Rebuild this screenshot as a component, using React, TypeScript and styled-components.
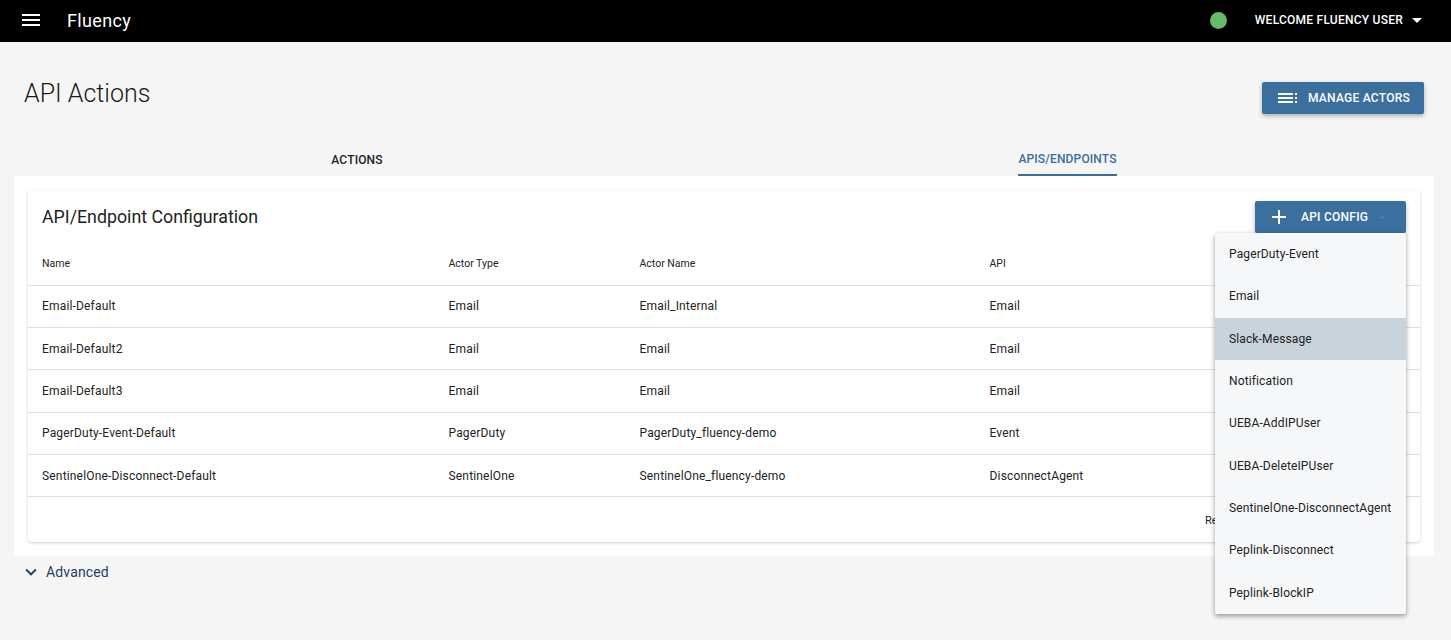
import { createGlobalStyle } from "styled-components";
import styled from "styled-components";

const rows = [
  ["Email-Default", "Email", "Email_Internal", "Email"],
  ["Email-Default2", "Email", "Email", "Email"],
  ["Email-Default3", "Email", "Email", "Email"],
  ["PagerDuty-Event-Default", "PagerDuty", "PagerDuty_fluency-demo", "Event"],
  ["SentinelOne-Disconnect-Default", "SentinelOne", "SentinelOne_fluency-demo", "DisconnectAgent"],
];

const menuItems = [
  "PagerDuty-Event",
  "Email",
  "Slack-Message",
  "Notification",
  "UEBA-AddIPUser",
  "UEBA-DeleteIPUser",
  "SentinelOne-DisconnectAgent",
  "Peplink-Disconnect",
  "Peplink-BlockIP",
];

export default function App() {
  return (
    <>
      <GlobalStyle />
      <AppBar>
        <MenuButton aria-label="menu">
          <svg width="24" height="24" viewBox="0 0 24 24" fill="currentColor">
            <path d="M3 18h18v-2H3v2zm0-5h18v-2H3v2zm0-7v2h18V6H3z" />
          </svg>
        </MenuButton>
        <Brand>Fluency</Brand>
        <StatusDot />
        <UserMenu>
          WELCOME FLUENCY USER
          <svg width="24" height="24" viewBox="0 0 24 24" fill="currentColor">
            <path d="M7 10l5 5 5-5z" />
          </svg>
        </UserMenu>
      </AppBar>

      <Page>
        <PageHeader>
          <Title>API Actions</Title>
          <ManageButton>
            <svg width="24" height="24" viewBox="0 0 24 24" fill="currentColor">
              <path d="M3 7h15v2H3zM3 11h15v2H3zM3 15h15v2H3zM20 7h2v2h-2zM20 11h2v2h-2zM20 15h2v2h-2z" />
            </svg>
            MANAGE ACTORS
          </ManageButton>
        </PageHeader>

        <Tabs>
          <Tab>
            <TabLabel>ACTIONS</TabLabel>
          </Tab>
          <Tab>
            <TabLabel $active>APIS/ENDPOINTS</TabLabel>
          </Tab>
        </Tabs>

        <Panel>
          <Card>
            <CardHeader>
              <CardTitle>API/Endpoint Configuration</CardTitle>
              <ConfigWrap>
                <ConfigButton>
                  <svg width="24" height="24" viewBox="0 0 24 24" fill="currentColor">
                    <path d="M19 13h-6v6h-2v-6H5v-2h6V5h2v6h6v2z" />
                  </svg>
                  <span>API CONFIG</span>
                  <Caret viewBox="0 0 24 24" fill="currentColor">
                    <path d="M7 14l5-5 5 5z" />
                  </Caret>
                </ConfigButton>
                <Menu>
                  {menuItems.map((item) => (
                    <MenuItem key={item} $selected={item === "Slack-Message"}>
                      {item}
                    </MenuItem>
                  ))}
                </Menu>
              </ConfigWrap>
            </CardHeader>

            <Table>
              <thead>
                <tr>
                  <HeadCell $width={406.5}>Name</HeadCell>
                  <HeadCell $width={191}>Actor Type</HeadCell>
                  <HeadCell $width={350}>Actor Name</HeadCell>
                  <HeadCell>API</HeadCell>
                </tr>
              </thead>
              <tbody>
                {rows.map((row) => (
                  <tr key={row[0]}>
                    {row.map((cell, i) => (
                      <Cell key={i}>{cell}</Cell>
                    ))}
                  </tr>
                ))}
              </tbody>
            </Table>

            <CardFooter>
              <FooterText>Re</FooterText>
            </CardFooter>
          </Card>
        </Panel>

        <Advanced>
          <svg width="22" height="22" viewBox="0 0 24 24" fill="currentColor">
            <path d="M7.41 8.59L12 13.17l4.59-4.58L18 10l-6 6-6-6 1.41-1.41z" />
          </svg>
          Advanced
        </Advanced>
      </Page>
    </>
  );
}

const GlobalStyle = createGlobalStyle`
  html, body {
    margin: 0;
    height: 100%;
    overflow: hidden;
    background: #f5f5f5;
    font-family: Roboto, "Liberation Sans", sans-serif;
  }
  * { box-sizing: border-box; }
`;

const AppBar = styled.header`
  height: 42px;
  background: #000;
  color: #fff;
  display: flex;
  align-items: center;
  padding: 0 22px 0 19px;
`;
const MenuButton = styled.button`
  display: flex;
  margin-top: -2px;
  padding: 0;
  border: 0;
  background: none;
  color: #fff;
`;
const Brand = styled.div`
  margin: -2px 0 0 24px;
  font-size: 18px;
  letter-spacing: 0.35px;
  flex: 1;
`;
const StatusDot = styled.span`
  width: 17px;
  height: 17px;
  margin: -2px 28px 0 0;
  border-radius: 50%;
  background: #66bb6a;
`;
const UserMenu = styled.div`
  display: flex;
  align-items: center;
  gap: 2px;
  margin-top: -2px;
  font-size: 12px;
  font-weight: 500;
  letter-spacing: 0.24px;
`;

const Page = styled.main`
  padding: 0 14px;
`;
const PageHeader = styled.div`
  height: 98px;
  display: flex;
  justify-content: space-between;
  align-items: flex-start;
  padding: 40px 13px 0 10px;
`;
const Title = styled.h1`
  margin: -3px 0 0;
  font-size: 25px;
  line-height: 30px;
  font-weight: 300;
  color: #1a1a1a;
`;
const SolidButton = styled.button`
  display: flex;
  align-items: center;
  height: 32px;
  border: 0;
  border-radius: 2px;
  background: #3a6f9e;
  color: #fff;
  font-family: inherit;
  font-size: 12px;
  font-weight: 500;
  letter-spacing: 0.25px;
  box-shadow: 0 2px 4px rgba(0, 0, 0, 0.3);
`;
const ManageButton = styled(SolidButton)`
  width: 162px;
  padding: 0 0 0 13px;
  gap: 9px;
`;
const Tabs = styled.nav`
  display: grid;
  grid-template-columns: 686px 1fr;
  height: 36px;
`;
const Tab = styled.div`
  display: flex;
  justify-content: center;
  & + & {
    padding-right: 2px;
  }
`;
const TabLabel = styled.div<{ $active?: boolean }>`
  display: flex;
  align-items: center;
  height: 36px;
  padding-top: 4px;
  font-size: 12px;
  font-weight: 500;
  letter-spacing: 0.14px;
  color: ${(p) => (p.$active ? "#3a6f9e" : "#222")};
  border-bottom: ${(p) => (p.$active ? "2px solid #3a6f9e" : "0")};
`;
const Panel = styled.section`
  height: 380px;
  background: #fff;
  padding: 14px;
  margin-right: 3px;
`;
const Card = styled.div`
  height: 352px;
  background: #fff;
  border-radius: 4px;
  box-shadow: 0 1px 3px rgba(0, 0, 0, 0.2);
`;
const CardHeader = styled.div`
  height: 52px;
  display: flex;
  justify-content: space-between;
  align-items: flex-start;
  padding: 11px 14px 0;
`;
const CardTitle = styled.h2`
  margin: 5px 0 0;
  font-size: 17.8px;
  line-height: 22px;
  font-weight: 400;
  color: #222;
`;
const ConfigWrap = styled.div`
  position: relative;
`;
const ConfigButton = styled(SolidButton)`
  width: 151px;
  padding: 0 0 0 12px;
  span {
    margin-left: 10px;
  }
`;
const Caret = styled.svg`
  width: 20px;
  height: 20px;
  margin-left: 4px;
  color: #3f7fc0;
`;
const Menu = styled.ul`
  position: absolute;
  z-index: 2;
  top: 32px;
  right: 0;
  width: 191px;
  margin: 0;
  padding: 0;
  list-style: none;
  background: #f6f7f9;
  border-radius: 2px;
  box-shadow: 0 2px 5px rgba(0, 0, 0, 0.4);
`;
const MenuItem = styled.li<{ $selected?: boolean }>`
  height: 42.3px;
  display: flex;
  align-items: center;
  padding-left: 14px;
  font-size: 12px;
  letter-spacing: 0.13px;
  color: #222;
  background: ${(p) => (p.$selected ? "#c8d3dc" : "transparent")};
`;
const Table = styled.table`
  width: 100%;
  border-collapse: collapse;
  table-layout: fixed;
`;
const HeadCell = styled.th<{ $width?: number }>`
  height: 43px;
  padding: 0 0 0 14px;
  text-align: left;
  font-size: 10.5px;
  font-weight: 400;
  color: #222;
  width: ${(p) => (p.$width ? `${p.$width}px` : "auto")};
  border-bottom: 1px solid #e0e0e0;
`;
const Cell = styled.td`
  height: 42.4px;
  padding: 0 0 0 14px;
  font-size: 12px;
  color: #222;
  letter-spacing: 0.17px;
  border-bottom: 1px solid #e0e0e0;
`;
const CardFooter = styled.div`
  padding: 15px 0 0 1177px;
  line-height: 13px;
`;
const FooterText = styled.span`
  font-size: 11px;
  color: #222;
`;
const Advanced = styled.div`
  display: flex;
  align-items: center;
  gap: 4px;
  height: 32px;
  padding-left: 6px;
  font-size: 14px;
  letter-spacing: 0.15px;
  color: #1f3f5f;
`;
